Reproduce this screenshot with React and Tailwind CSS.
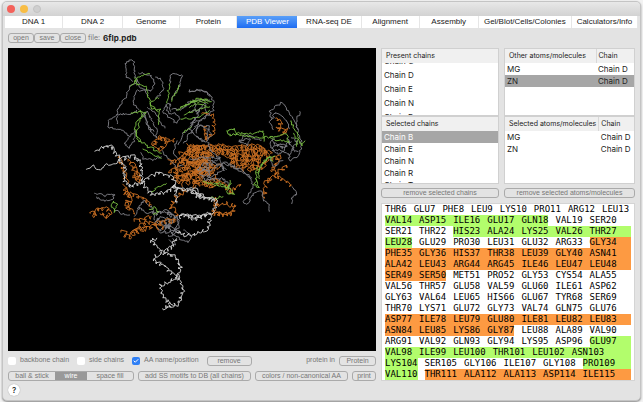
import React, { useMemo, useState } from "react";
import { Check } from "lucide-react";

const TABS = [
  "DNA 1",
  "DNA 2",
  "Genome",
  "Protein",
  "PDB Viewer",
  "RNA-seq DE",
  "Alignment",
  "Assembly",
  "Gel/Blot/Cells/Colonies",
  "Calculators/Info",
];

const GREY = "#808086";
const WHITE = "#cfcfcf";
const GREEN = "#78bd42";
const ORANGE = "#c76e22";

// Each domain has its own origin; strands are [color, coil radius, points].
const DOMAINS = [
  {
    origin: [216, 6],
    strands: [
      [GREY, 0, "160,95 140,85 135,40 150,30 162,38 164,80 172,95"],
      [GREY, 0, "172,95 150,110 135,145 120,165 110,195 85,208 82,230 105,238 130,240 150,260 165,240"],
      [GREY, 0, "165,240 160,280 145,292 132,280 145,262"],
      [GREY, 0, "110,195 140,190 150,195 170,180"],
      [GREY, 0, "172,72 190,70 212,76 222,100 215,120 195,122 178,110 172,90"],
      [GREY, 0, "225,80 245,88 250,110 240,135 225,145"],
      [GREY, 0, "205,140 190,118 165,125 160,160 168,175 178,180"],
      [GREY, 0, "110,195 112,222"],
      [GREY, 0, "270,100 272,75 290,70 305,80 300,105 285,130 275,150"],
      [GREY, 0, "260,165 250,185 275,210 292,220 300,200 285,190 265,190 258,168 270,160 272,185"],
      [GREY, 0, "325,118 330,125 350,120 375,125 390,140"],
      [GREY, 0, "275,178 300,180 330,155 390,150"],
      [GREY, 0, "190,190 210,240 230,265 230,240 215,210 200,185 185,195"],
      [GREY, 0, "200,170 230,190 240,215 255,235"],
      [GREY, 0, "185,195 200,205 205,235 222,245"],
      [GREY, 0, "185,310 190,325 220,330 245,320"],
      [GREY, 0, "290,270 280,310 300,330"],
      [GREY, 0, "345,205 330,235 310,250 295,285"],
      [GREY, 0, "390,185 360,215 330,250 310,280"],
      [GREY, 0, "245,300 270,330 290,350 310,345"],
      [GREY, 0, "340,150 350,190 375,160 380,190"],
      [GREY, 0, "345,240 360,225 385,230 395,260 370,275 348,260"],
      [GREEN, 0, "150,110 165,95 185,75 210,72"],
      [GREEN, 0, "165,85 172,105 200,110 205,140 215,165 235,185"],
      [GREEN, 0, "150,190 190,185 200,190 170,215 165,240 175,270 205,290 245,310"],
      [GREEN, 0, "180,180 185,200 175,230 170,250 180,275"],
      [GREEN, 0, "190,300 215,312 245,325"],
      [GREEN, 0, "268,100 265,130 260,160"],
      [GREEN, 0, "298,105 285,130 275,155"],
      [GREEN, 0, "240,140 210,155 215,175 240,180 235,225"],
      [GREEN, 0, "300,170 340,155 385,160"],
      [GREEN, 0, "290,180 320,165 350,145 385,150"],
      [GREEN, 0, "305,205 350,205 390,180"],
      [GREEN, 0, "310,195 345,180 390,170"],
      [GREEN, 0, "310,250 320,240 335,230"],
      [ORANGE, 4, "215,285 240,260 260,280 240,300 220,280"],
      [ORANGE, 4, "240,262 275,275 285,265"],
      [ORANGE, 4, "120,320 125,345 135,380 145,400"],
      [ORANGE, 4, "145,330 165,350 180,390"],
      [ORANGE, 4, "155,350 175,395 160,375"],
      [ORANGE, 6, "265,340 300,330 330,300 370,290 400,300"],
      [ORANGE, 6, "265,360 300,365 340,340 390,330"],
      [ORANGE, 6, "275,380 320,385 350,360 395,370"],
      [ORANGE, 6, "310,400 345,395 380,400 400,390"],
      [ORANGE, 7, "305,310 320,350 310,390"],
      [ORANGE, 7, "345,290 350,340 365,390"],
      [ORANGE, 6, "320,285 335,320 320,340"],
      [ORANGE, 6, "380,300 375,340 385,385"],
      [ORANGE, 5, "290,345 285,375 300,400"],
      [ORANGE, 6, "330,290 365,310 395,318"],
      [ORANGE, 6, "300,345 345,320 400,345"],
      [ORANGE, 6, "300,385 335,370 380,355 410,360"],
      [WHITE, 3, "50,305 70,290 95,290 105,310 118,325"],
      [WHITE, 0, "18,360 40,348 60,362 75,345 105,340 118,328"],
      [WHITE, 3, "118,328 135,355 130,390 150,410 185,400"],
      [WHITE, 3, "118,328 160,318 180,335 185,365 185,400"],
      [WHITE, 3, "185,400 210,380 240,368 275,380 285,410"],
      [WHITE, 3, "185,400 215,435 260,425 285,410"],
      [WHITE, 3, "285,415 310,420 345,425 370,440"],
    ],
  },
  {
    origin: [546, 66],
    strands: [
      [ORANGE, 7, "0,232 40,235 90,232 140,235 190,230 225,240"],
      [ORANGE, 7, "5,250 50,255 95,245 150,250 205,245 240,250"],
      [ORANGE, 7, "80,240 120,258 165,265 215,262"],
      [ORANGE, 7, "120,275 160,280 200,275"],
      [ORANGE, 7, "140,290 175,298 210,290"],
      [ORANGE, 6, "120,235 135,265 125,290"],
      [ORANGE, 6, "160,230 170,262 160,295"],
      [ORANGE, 6, "190,235 205,270 190,300"],
      [ORANGE, 5, "0,285 30,275 60,290 95,285"],
      [ORANGE, 6, "0,320 30,305 60,310 80,330"],
      [ORANGE, 6, "10,345 40,340 60,350 90,335"],
      [ORANGE, 6, "20,270 25,310 15,340"],
      [ORANGE, 4, "80,330 110,345 120,370 150,345"],
      [ORANGE, 4, "70,430 120,435 135,410 110,400 80,405 75,385"],
      [ORANGE, 3, "40,130 70,135 70,190 45,205 50,170"],
      [ORANGE, 4, "258,145 275,155 262,180 290,180 270,195"],
      [ORANGE, 4, "222,385 228,340 260,315 290,285"],
      [ORANGE, 4, "245,265 270,262 245,300 270,325 305,345"],
      [ORANGE, 4, "215,235 235,260 215,300"],
      [GREY, 0, "0,65 30,60 60,72 72,95 70,120 35,150 0,160"],
      [GREY, 0, "0,180 20,200 50,215 55,180 25,165 20,190"],
      [GREY, 0, "0,125 30,120 20,140 0,170"],
      [GREY, 0, "245,150 240,125 255,110 278,97 290,115 310,150 325,180"],
      [GREY, 0, "250,150 250,130 265,130 290,150 300,175"],
      [GREY, 0, "245,145 240,160 250,180"],
      [GREY, 0, "330,125 320,150 325,190 335,215 330,250 300,275 295,250"],
      [GREY, 0, "250,200 240,230 265,255 290,230 270,220 245,235"],
      [GREY, 0, "245,240 270,240 300,255 310,230 290,205"],
      [GREY, 3, "245,215 275,235 305,215"],
      [GREY, 0, "300,200 320,215 305,240 325,245"],
      [GREY, 0, "145,215 180,205 170,225 150,212 165,195 215,210"],
      [GREY, 0, "40,320 60,300 100,280 130,290 180,320 190,350 170,380 160,400 172,405 190,370 215,365 220,390 235,405 238,425"],
      [GREY, 0, "95,275 125,285 155,300 185,325"],
      [GREY, 0, "305,350 322,370 305,385 305,402"],
      [GREY, 0, "0,270 50,260 90,265 100,300 50,330 30,310 60,290"],
      [GREY, 3, "20,300 50,295 60,330 100,325 120,350"],
      [GREY, 3, "35,285 80,280 110,300"],
      [GREY, 0, "55,215 60,240 90,265 70,275 40,260"],
      [GREY, 0, "240,262 250,290 280,270"],
      [GREEN, 0, "118,182 135,175 140,190 122,198 112,185 118,178"],
      [GREEN, 0, "140,190 190,190 220,180 222,215"],
      [GREEN, 0, "135,195 180,200 215,202 250,200"],
      [GREEN, 0, "200,310 220,275 240,260 250,275"],
      [GREEN, 0, "205,325 210,290 235,262 255,258"],
      [GREEN, 0, "200,290 200,330 190,345 205,350 195,325"],
      [GREEN, 0, "240,205 290,190 295,215 250,210"],
      [GREEN, 0, "300,150 325,195 320,230"],
      [GREEN, 0, "310,190 335,225 345,212"],
      [GREEN, 0, "40,330 50,340 90,340 120,355 135,375 110,370 120,330"],
      [GREEN, 0, "70,345 110,355 125,340"],
      [GREEN, 0, "0,95 40,90 65,95"],
      [GREEN, 0, "0,110 20,102 50,108"],
      [WHITE, 3, "0,360 20,380 50,385 75,392"],
      [WHITE, 3, "0,440 35,438 60,432"],
    ],
  },
  {
    origin: [216, 366],
    strands: [
      [GREY, 0, "40,72 60,70 75,80 85,70 103,72 98,90 65,92 50,80"],
      [GREY, 0, "105,120 125,130 150,135"],
      [GREY, 0, "165,140 180,110 200,130 230,125 270,130 300,150 280,185 240,190 225,160 240,140 280,150"],
      [GREY, 0, "170,120 190,90 215,110 225,150"],
      [GREY, 4, "225,135 260,125 285,145 255,165 230,150"],
      [GREY, 4, "240,180 270,170 295,185 265,195"],
      [GREY, 0, "235,155 265,150 270,185 300,170 290,140 250,185"],
      [GREY, 0, "280,190 300,210 325,215 335,200 310,180"],
      [GREY, 0, "270,210 285,225 278,205"],
      [GREEN, 0, "100,90 95,110 105,125 110,105 100,95"],
      [GREEN, 0, "215,65 240,50 260,40"],
      [GREEN, 0, "210,120 225,110 235,125 220,135"],
      [GREEN, 0, "385,85 430,80"],
      [ORANGE, 4, "32,125 45,138 50,118 80,115 95,130 80,142 60,130"],
      [ORANGE, 6, "125,185 145,200 180,178 220,172 250,170"],
      [ORANGE, 5, "160,185 190,160 240,158 290,150"],
      [ORANGE, 6, "130,50 150,80 140,110 160,130"],
      [ORANGE, 4, "130,70 160,75 190,85 215,105"],
      [ORANGE, 4, "315,60 290,80 270,110 295,135"],
      [ORANGE, 4, "410,85 400,130 450,135"],
      [ORANGE, 4, "165,150 190,150 215,140"],
      [WHITE, 3, "285,50 290,100"],
      [WHITE, 3, "285,52 315,60 345,55 360,80 410,90 405,115 390,135 385,175 350,190 320,195 290,185"],
      [WHITE, 3, "300,130 340,150 390,130"],
      [WHITE, 3, "300,142 320,130 335,145"],
      [WHITE, 3, "230,205 212,212 225,225 250,248 275,232 290,205"],
      [WHITE, 3, "250,248 290,262 300,290 295,320 308,360 295,400 280,408 248,415"],
      [WHITE, 3, "250,248 220,262 222,275 250,285 270,305 295,322 265,335 240,348 245,375 270,400 280,408"],
    ],
  },
];

function random(seed) {
  let s = seed * 7919 + 13;
  return () => {
    s = (s * 16807) % 2147483647;
    return s / 2147483647 - 0.5;
  };
}

// Walks along the points, jittering the bonds or winding them into a coil
function strandPath(text, radius, [ox, oy], seed) {
  const pts = text.split(" ").map((p) => p.split(",").map(Number));
  const rnd = random(seed);
  const out = [];
  let phase = seed;
  for (let i = 1; i < pts.length; i++) {
    const [x0, y0] = pts[i - 1];
    const [x1, y1] = pts[i];
    const len = Math.hypot(x1 - x0, y1 - y0);
    const steps = Math.max(1, Math.round(len / (radius ? 3 : 5)));
    for (let k = 0; k < steps; k++) {
      const t = k / steps;
      phase += 1.3 + rnd() * 1.6;
      const r = radius * 1.3;
      const x = x0 + (x1 - x0) * t + Math.cos(phase) * r + rnd() * 7;
      const y = y0 + (y1 - y0) * t + Math.sin(phase) * r + rnd() * 7;
      out.push(`${(x + ox).toFixed(1)} ${(y + oy).toFixed(1)}`);
    }
  }
  const [ex, ey] = pts[pts.length - 1];
  out.push(`${ex + ox} ${ey + oy}`);
  return "M" + out.join("L");
}

function Molecule() {
  const paths = useMemo(
    () =>
      DOMAINS.flatMap((d, n) =>
        d.strands.map(([color, radius, pts], i) => ({
          color,
          d: strandPath(pts, radius, d.origin, n * 100 + i + 1),
        }))
      ),
    []
  );
  return (
    <svg viewBox="0 0 1104 909" className="block w-full bg-black" role="img" aria-label="6flp.pdb">
      {paths.map((p, i) => (
        <path key={i} d={p.d} fill="none" stroke={p.color} strokeWidth="2.8" strokeLinejoin="round" />
      ))}
    </svg>
  );
}

// g = strand (green), o = helix (orange), n = none; "+" runs to the line end
const SEQUENCE = [
  [["n", "THR6 GLU7 PHE8 LEU9 LYS10 PRO11 ARG12 LEU13"]],
  [["g", "VAL14 ASP15 ILE16 GLU17 GLN18"], ["n", "VAL19 SER20"]],
  [["n", "SER21 THR22"], ["g+", "HIS23 ALA24 LYS25 VAL26 THR27"]],
  [["g", "LEU28"], ["n", "GLU29 PRO30 LEU31 GLU32 ARG33"], ["o+", "GLY34"]],
  [["o+", "PHE35 GLY36 HIS37 THR38 LEU39 GLY40 ASN41"]],
  [["o+", "ALA42 LEU43 ARG44 ARG45 ILE46 LEU47 LEU48"]],
  [["o", "SER49 SER50"], ["n", "MET51 PRO52 GLY53 CYS54 ALA55"]],
  [["n", "VAL56 THR57 GLU58 VAL59 GLU60 ILE61 ASP62"]],
  [["n", "GLY63 VAL64 LEU65 HIS66 GLU67 TYR68 SER69"]],
  [["n", "THR70 LYS71 GLU72 GLY73 VAL74 GLN75 GLU76"]],
  [["o+", "ASP77 ILE78 LEU79 GLU80 ILE81 LEU82 LEU83"]],
  [["o", "ASN84 LEU85 LYS86 GLY87"], ["n", "LEU88 ALA89 VAL90"]],
  [["n", "ARG91 VAL92 GLN93 GLY94 LYS95 ASP96"], ["g+", "GLU97"]],
  [["g+", "VAL98 ILE99 LEU100 THR101 LEU102 ASN103"]],
  [["g", "LYS104"], ["n", "SER105 GLY106 ILE107 GLY108"], ["g+", "PRO109"]],
  [["g", "VAL110"], ["o+", "THR111 ALA112 ALA113 ASP114 ILE115"]],
];

const RUN_STYLE = {
  n: "",
  g: "bg-[#b2fd6c]",
  "g+": "bg-[#b2fd6c] flex-1",
  o: "bg-[#fd9a42]",
  "o+": "bg-[#fd9a42] flex-1",
};

function Sequence() {
  return (
    <div className="mt-[5px] border border-[#d4d4d4] bg-white px-[3px] font-['DejaVu_Sans_Mono',monospace] text-[9px] leading-[11px] text-black">
      {SEQUENCE.map((line, i) => (
        <div key={i} className="flex gap-[7px]">
          {line.map(([kind, text], j) => (
            <div key={j} className={`flex gap-[7px] ${RUN_STYLE[kind]}`}>
              {text.split(" ").map((aa) => (
                <span key={aa}>{aa}</span>
              ))}
            </div>
          ))}
        </div>
      ))}
    </div>
  );
}

function Button({ className = "px-[6px]", children }) {
  return (
    <button
      type="button"
      className={`h-[10px] whitespace-nowrap rounded-[3px] border border-[#aaaaaa] font-['Liberation_Sans',sans-serif] text-[7px] leading-[8px] text-[#777777] ${className}`}
    >
      {children}
    </button>
  );
}

function CheckBox({ label, defaultChecked }) {
  return (
    <label className="flex items-center gap-[4px]">
      <span className="relative flex size-[8px]">
        <input
          type="checkbox"
          defaultChecked={defaultChecked}
          className="peer size-[8px] appearance-none rounded-[2px] bg-white checked:bg-[#2f7ff5]"
        />
        <Check
          strokeWidth={4}
          className="pointer-events-none absolute inset-px hidden size-[6px] text-white peer-checked:block"
        />
      </span>
      {label}
    </label>
  );
}

function ChainList({ title, rows, selected, scrolled }) {
  return (
    <div className="h-[68px] overflow-hidden border border-[#d0d0d0] bg-white">
      <h2 className="bg-[#f0f0f0] px-[4px] text-[7px] leading-[14px]">{title}</h2>
      <div className="h-[52px] overflow-hidden">
        <ul className={scrolled ? "-mt-[9px] leading-[14px]" : "leading-[12px]"}>
          {rows.map((r) => (
            <li key={r} className={r === selected ? "bg-[#a6a6a6] px-[2px] text-white" : "px-[2px]"}>
              {r}
            </li>
          ))}
        </ul>
      </div>
    </div>
  );
}

function AtomTable({ title, selected }) {
  return (
    <div className="h-[68px] overflow-hidden border border-[#d0d0d0] bg-white">
      <table className="w-full border-collapse text-left leading-[12px]">
        <thead>
          <tr className="h-[14px] bg-[#f0f0f0] text-[7px]">
            <th className="whitespace-nowrap py-0 pl-[4px] pr-[2px] font-normal">{title}</th>
            <th className="w-[38px] border-l border-[#d8d8d8] px-[2px] py-0 font-normal">Chain</th>
          </tr>
        </thead>
        <tbody>
          {["MG", "ZN"].map((atom) => (
            <tr key={atom} className={atom === selected ? "bg-[#a6a6a6]" : ""}>
              <td className="px-[2px] py-0">{atom}</td>
              <td className="whitespace-nowrap px-[2px] py-0">Chain D</td>
            </tr>
          ))}
        </tbody>
      </table>
    </div>
  );
}

export default function App() {
  const [tab, setTab] = useState("PDB Viewer");
  const [style, setStyle] = useState("wire");

  return (
    <div className="min-h-screen bg-[#f3f3f3] px-[2px] pb-[2px] pt-px font-[Inter,sans-serif] text-[8px] text-[#222222]">
      <div className="overflow-hidden rounded-[5px] border border-[#c4c4c4] bg-[#e3e3e3] pb-[4px] shadow-[0_1px_2px_#888888]">
        {/* title bar */}
        <div className="flex h-[14px] items-center gap-[5px] bg-gradient-to-b from-[#e8e8e8] to-[#d2d2d2] pl-[4px]">
          <button type="button" aria-label="Close" className="size-[8px] rounded-full bg-[#f4625b]" />
          <button type="button" aria-label="Minimize" className="size-[8px] rounded-full bg-[#f8bd45]" />
          <button type="button" aria-label="Zoom" className="size-[8px] rounded-full border border-[#c2c2c2] bg-[#cfcfcf]" />
        </div>

        {/* tabs */}
        <div
          role="tablist"
          className="mx-[2px] grid grid-cols-[58fr_60fr_57fr_57fr_60fr_64fr_58fr_59fr_93fr_66fr] bg-white font-['Liberation_Sans',sans-serif] text-[8px] leading-[12px]"
        >
          {TABS.map((t) => (
            <button
              key={t}
              type="button"
              role="tab"
              aria-selected={t === tab}
              onClick={() => setTab(t)}
              className={
                t === tab
                  ? "h-[12px] whitespace-nowrap bg-gradient-to-b from-[#5a9ff8] to-[#1d6cf2] text-white"
                  : "h-[12px] whitespace-nowrap border-r border-[#e6e6e6]"
              }
            >
              {t}
            </button>
          ))}
        </div>

        {/* file bar */}
        <div className="mt-[5px] flex items-center px-[5px] text-[7px] text-[#777777]">
          <Button className="w-[26px]">open</Button>
          <Button className="w-[26px]">save</Button>
          <Button className="w-[26px]">close</Button>
          <span className="ml-[2px]">file:</span>
          <span className="ml-[3px] text-[8px] font-bold leading-[10px] text-[#222222]">6flp.pdb</span>
        </div>

        <div className="mt-[4px] grid grid-cols-[368fr_254fr] gap-[5px] px-[5px]">
          {/* viewer */}
          <div className="min-w-0">
            <Molecule />
            <div className="mt-[5px] flex h-[10px] items-center gap-[8px] font-['Liberation_Sans',sans-serif] text-[7px] text-[#777777]">
              <CheckBox label="backbone chain" />
              <CheckBox label="side chains" />
              <CheckBox label="AA name/position" defaultChecked />
              <Button className="w-[45px]">remove</Button>
              <div className="ml-auto flex items-center gap-[4px]">
                protein in
                <Button className="w-[37px]">Protein</Button>
              </div>
            </div>
            <div className="mt-[5px] flex items-center justify-between">
              <div className="flex h-[10px] overflow-hidden rounded-[3px] border border-[#aaaaaa] font-['Liberation_Sans',sans-serif] text-[7px] leading-[8px] text-[#777777]">
                {["ball & stick", "wire", "space fill"].map((s) => (
                  <button
                    key={s}
                    type="button"
                    onClick={() => setStyle(s)}
                    className={
                      s === style
                        ? "w-[32px] bg-[#999999] text-white"
                        : "w-[46px] whitespace-nowrap"
                    }
                  >
                    {s}
                  </button>
                ))}
              </div>
              <Button>add SS motifs to DB (all chains)</Button>
              <Button>colors / non-canonical AA</Button>
              <Button className="w-[24px]">print</Button>
            </div>
            <button
              type="button"
              aria-label="Help"
              className="mt-[3px] block size-[12px] rounded-full bg-white text-[8px] font-medium leading-[12px] shadow-[0_0_1px_#888888]"
            >
              ?
            </button>
          </div>

          {/* chains and sequence */}
          <div className="min-w-0">
            <div className="grid grid-cols-[118fr_131fr] gap-x-[5px]">
              <ChainList
                title="Present chains"
                rows={["Chain C", "Chain D", "Chain E", "Chain N", "Chain R"]}
                scrolled
              />
              <AtomTable title="Other atoms/molecules" selected="ZN" />
              <ChainList
                title="Selected chains"
                rows={["Chain B", "Chain E", "Chain N", "Chain R", "Chain T"]}
                selected="Chain B"
              />
              <AtomTable title="Selected atoms/molecules" />
              <Button className="mt-[4px]">remove selected chains</Button>
              <Button className="mt-[4px]">remove selected atoms/molecules</Button>
            </div>
            <Sequence />
          </div>
        </div>
      </div>
    </div>
  );
}
